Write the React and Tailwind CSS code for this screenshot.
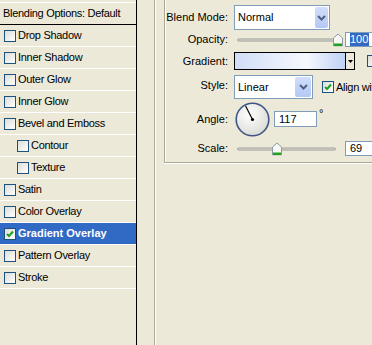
const font = "font-['Liberation_Sans','Arial',sans-serif]";

const CheckBox = ({ checked }) => (
  <span className="flex h-[12px] w-[12px] shrink-0 items-center justify-center border border-[#1C5180] bg-linear-to-br from-[#DCDCD7] to-white">
    {checked && (
      <svg width="8" height="8" viewBox="0 0 8 8">
        <path d="M1 4 L3 6 L7 1.5" fill="none" stroke="#21A121" strokeWidth="2" />
      </svg>
    )}
  </span>
);

const layers = [
  { name: "Drop Shadow" },
  { name: "Inner Shadow" },
  { name: "Outer Glow" },
  { name: "Inner Glow" },
  { name: "Bevel and Emboss" },
  { name: "Contour", indent: true },
  { name: "Texture", indent: true },
  { name: "Satin" },
  { name: "Color Overlay" },
  { name: "Gradient Overlay", checked: true, active: true },
  { name: "Pattern Overlay" },
  { name: "Stroke" },
];

const Chevron = () => (
  <svg width="9" height="6" viewBox="0 0 9 6">
    <path d="M1 1 L4.5 4.5 L8 1" fill="none" stroke="#4D6185" strokeWidth="2" />
  </svg>
);

const Select = ({ value, width, btn }) => (
  <div className={`flex h-full border border-[#7F9DB9] bg-white ${width}`}>
    <span className="flex flex-1 items-center pl-[3px] text-[11px]">{value}</span>
    <div className="p-[1px]">
      <div
        className={`flex h-full items-center justify-center rounded-[2px] bg-linear-to-b from-[#D2DDFB] to-[#B4C8F5] ${btn}`}
      >
        <Chevron />
      </div>
    </div>
  </div>
);

const Thumb = () => (
  <svg width="10" height="13" viewBox="0 0 10 13">
    <path d="M0.5 4.5 L5 0.5 L9.5 4.5 L9.5 12.5 L0.5 12.5 Z" fill="#F7F7F4" stroke="#8A9AA8" />
    <rect x="1" y="10" width="8" height="2.5" fill="#21A121" />
  </svg>
);

const Slider = ({ pos }) => (
  <div className="relative h-full w-[108px]">
    <div className="absolute left-[3px] right-[6px] top-1/2 h-[3px] -translate-y-1/2 rounded-full border border-[#9C9C96] bg-[#E4E2D8]" />
    <div className="absolute top-1/2 -translate-y-1/2" style={{ left: pos }}>
      <Thumb />
    </div>
  </div>
);

const Input = ({ value, selected, width }) => (
  <div className={`flex h-full items-center border border-[#7F9DB9] bg-white pl-[4px] text-[11px] ${width}`}>
    {selected ? <span className="bg-[#316AC5] pr-[1px] leading-[13px] text-white">{value}</span> : value}
  </div>
);

const Label = ({ children, className = "" }) => (
  <span className={`w-[64px] shrink-0 pr-[1px] text-right text-[11px] ${className}`}>{children}</span>
);

const Dial = () => (
  <svg width="35" height="35" viewBox="0 0 35 35">
    <defs>
      <radialGradient id="dialfill" cx="40%" cy="35%" r="70%">
        <stop offset="0%" stopColor="#FFFFFF" />
        <stop offset="100%" stopColor="#D9D9D4" />
      </radialGradient>
    </defs>
    <circle cx="17.5" cy="17.5" r="16.3" fill="url(#dialfill)" stroke="#3D5683" strokeWidth="1.6" />
    <line x1="17.5" y1="17.5" x2="10.6" y2="3.9" stroke="#000" strokeWidth="1.2" />
    <circle cx="17.5" cy="17.5" r="1.6" fill="#000" />
  </svg>
);

export default function App() {
  return (
    <div className={`flex h-[345px] w-[372px] overflow-hidden bg-[#ECE9D8] text-black ${font}`}>
      <div className="flex w-[137px] shrink-0 flex-col border-r border-black">
        <div className="h-[25px] border-b border-black">
          <div className="mt-[2px] border-t border-white pl-[3px] pt-[2px] text-[11px] leading-[16px] tracking-[-0.3px]">
            Blending Options: Default
          </div>
        </div>
        {layers.map((l) => (
          <div
            key={l.name}
            className={`flex h-[22px] items-center border-b border-white ${
              l.indent ? "pl-[17px]" : "pl-[4px]"
            } ${l.active ? "bg-[#316AC5] font-bold text-white" : ""}`}
          >
            <CheckBox checked={l.checked} />
            <span className={`ml-[2px] text-[11px] ${l.active ? "" : "tracking-[-0.3px]"}`}>{l.name}</span>
          </div>
        ))}
      </div>

      <div className="ml-[17px] flex-1 border-l border-[#ACA899] pl-[9px] shadow-[inset_1px_0_0_#fff]">
        <div className="flex w-[240px] flex-col border-b border-l border-[#ACA899] pb-[6px] pt-[5px] shadow-[inset_1px_0_0_#fff,0_1px_0_#fff]">
          <div className="flex h-[25px] items-center">
            <Label>Blend Mode:</Label>
            <div className="ml-[5px] h-full">
              <Select value="Normal" width="w-[96px]" btn="w-[13px]" />
            </div>
          </div>

          <div className="mt-[2px] flex h-[15px] items-center">
            <Label>Opacity:</Label>
            <div className="ml-[5px] h-full">
              <Slider pos={99} />
            </div>
            <div className="ml-[3px] h-full">
              <Input value="100" selected width="w-[40px]" />
            </div>
          </div>

          <div className="mt-[5px] flex h-[18px] items-center">
            <Label>Gradient:</Label>
            <div className="ml-[5px] flex h-full w-[121px] border border-black">
              <div className="flex-1 bg-linear-to-r from-[#D1DEF8] via-[#F6F8FD] via-65% to-[#BFD1F5]" />
              <div className="flex w-[9px] items-center justify-center border-l border-black bg-[#ECE9D8]">
                <svg width="5" height="3" viewBox="0 0 5 3">
                  <path d="M0 0 L5 0 L2.5 3 Z" fill="#000" />
                </svg>
              </div>
            </div>
            <div className="ml-[12px]">
              <CheckBox />
            </div>
          </div>

          <div className="mt-[5px] flex h-[24px] items-start">
            <Label className="pt-[2px]">Style:</Label>
            <div className="ml-[5px] h-full">
              <Select value="Linear" width="w-[79px]" btn="w-[16px]" />
            </div>
            <div className="ml-[9px] flex items-center self-center">
              <CheckBox checked />
              <span className="ml-[2px] whitespace-nowrap text-[11px] tracking-[-0.3px]">Align with Layer</span>
            </div>
          </div>

          <div className="mt-[3px] flex h-[34px] items-center">
            <Label>Angle:</Label>
            <div className="ml-[6px]">
              <Dial />
            </div>
            <div className="ml-[4px] h-[16px]">
              <Input value="117" width="w-[43px]" />
            </div>
            <span className="ml-[2px] self-start pt-[6px] text-[11px] leading-[10px]">°</span>
          </div>

          <div className="mt-[5px] flex h-[15px] items-center">
            <Label>Scale:</Label>
            <div className="ml-[5px] h-full">
              <Slider pos={38} />
            </div>
            <div className="ml-[3px] h-full">
              <Input value="69" width="w-[40px]" />
            </div>
          </div>
        </div>
      </div>
    </div>
  );
}
